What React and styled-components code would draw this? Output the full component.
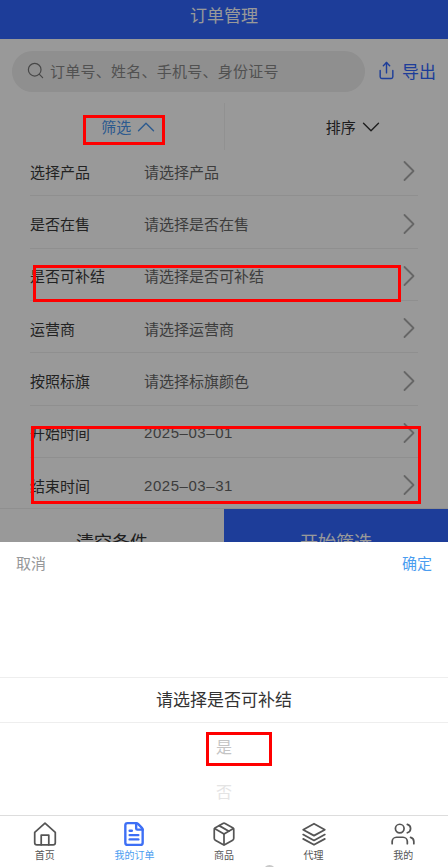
import styled, { createGlobalStyle } from "styled-components";
import { ChevronDown, ChevronRight, ChevronUp, FileText, Package, Search, Share, Users } from "lucide-react";

const GlobalStyle = createGlobalStyle`
  * {
    box-sizing: border-box;
  }
  body {
    margin: 0;
    font-family: "Liberation Sans", "Noto Sans CJK SC", sans-serif;
    background: #fff;
  }
`;

const Screen = styled.div`
  position: relative;
  width: 448px;
  height: 867px;
  overflow: hidden;
  background: #fff;
`;

const Header = styled.div`
  height: 39px;
  background: #3167ff;
  color: #fff;
  font-size: 17px;
  display: flex;
  align-items: center;
  justify-content: center;
  padding-bottom: 10px;
`;

const SearchRow = styled.div`
  display: flex;
  align-items: center;
  padding: 12px 12px 0;
  gap: 12px;
`;

const SearchBar = styled.div`
  flex-shrink: 0;
  width: 353px;
  height: 41px;
  border-radius: 21px;
  background: #eee;
  display: flex;
  align-items: center;
  padding: 0 0 2px 14px;
  gap: 5px;
  color: #888;
  font-size: 15px;
  letter-spacing: 0.25px;
`;

const ExportBtn = styled.div`
  display: flex;
  align-items: center;
  gap: 6px;
  color: #3167ff;
  font-size: 17px;
  white-space: nowrap;
  padding-bottom: 2px;
`;

const Tabs = styled.div`
  display: flex;
  height: 47px;
  margin-top: 11px;
`;

const Tab = styled.div`
  flex: 1;
  display: flex;
  align-items: center;
  justify-content: center;
  padding-left: 39px;
  font-size: 15px;
  color: ${(p) => (p.$active ? "#4a96ee" : "#333")};
  & + & {
    border-left: 1px solid #f2f2f2;
  }
`;

const RowList = styled.div`
  padding: 0 30px;
  margin-top: -6px;
`;

const Row = styled.div`
  height: 52.35px;
  display: flex;
  align-items: center;
  padding-top: 3px;
  font-size: 15px;
  color: #3a3a3a;
  border-bottom: 1px solid ${(p) => (p.$last ? "transparent" : "#eee")};
`;

const RowLabel = styled.div`
  width: 114px;
`;

const RowValue = styled.div`
  flex: 1;
  color: #666;
  letter-spacing: ${(p) => (p.$date ? "0.55px" : "0")};
`;

const RowArrow = styled.div`
  display: flex;
  margin-right: -9px;
  color: #aaa;
`;

const Footer = styled.div`
  display: flex;
  height: 50px;
  margin-top: -2px;
  border-top: 1px solid #eee;
`;

const FootBtn = styled.div`
  flex: 1;
  display: flex;
  justify-content: center;
  padding-top: 19px;
  font-size: 18px;
  background: ${(p) => (p.$primary ? "#3167ff" : "#fff")};
  color: ${(p) => (p.$primary ? "#fff" : "#333")};
`;

const Mask = styled.div`
  position: absolute;
  inset: 0;
  background: rgba(0, 0, 0, 0.4);
`;

const Sheet = styled.div`
  position: absolute;
  left: 0;
  right: 0;
  top: 542px;
  bottom: 0;
  background: #fff;
  display: flex;
  flex-direction: column;
`;

const SheetHead = styled.div`
  height: 136px;
  display: flex;
  justify-content: space-between;
  padding: 10px 16px 0;
  font-size: 15px;
  border-bottom: 1px solid #eee;
`;

const Cancel = styled.span`
  color: #969799;
`;

const Confirm = styled.span`
  color: #4a9df0;
`;

const SheetTitle = styled.div`
  height: 45px;
  display: flex;
  align-items: center;
  justify-content: center;
  padding-bottom: 3px;
  font-size: 17px;
  color: #333;
  border-bottom: 1px solid #eee;
`;

const Wheel = styled.div`
  height: 92px;
  display: flex;
  flex-direction: column;
  align-items: center;
`;

const Option = styled.div`
  height: 45px;
  display: flex;
  align-items: center;
  font-size: 16px;
  color: ${(p) => p.$color};
`;

const TabBar = styled.div`
  flex: 1;
  display: flex;
  border-top: 1px solid #ddd;
`;

const NavItem = styled.div`
  flex: 1;
  display: flex;
  flex-direction: column;
  align-items: center;
  padding-top: 5px;
  font-size: 10px;
  color: ${(p) => (p.$active ? "#4a9df0" : "#555")};
  svg {
    color: ${(p) => (p.$active ? "#3d6ff5" : "#555")};
  }
`;

const HomeDot = styled.div`
  position: absolute;
  left: 263px;
  top: 865px;
  width: 13px;
  height: 13px;
  border-radius: 50%;
  background: #c8c8c8;
`;

const RedBox = styled.div`
  position: absolute;
  left: ${(p) => p.$x}px;
  top: ${(p) => p.$y}px;
  width: ${(p) => p.$w}px;
  height: ${(p) => p.$h}px;
  border: 3px solid #f00;
`;

const HomeIcon = ({ size, strokeWidth }) => (
  <svg width={size} height={size} viewBox="0 0 24 24" fill="none" stroke="currentColor" strokeWidth={strokeWidth} strokeLinejoin="round" strokeLinecap="round">
    <path d="M2.5 10.5 12 2l9.5 8.5V20a2 2 0 0 1-2 2h-15a2 2 0 0 1-2-2z" />
    <path d="M8.5 22v-9h7v9" />
  </svg>
);

const StackIcon = ({ size, strokeWidth }) => (
  <svg width={size} height={size} viewBox="0 0 24 24" fill="none" stroke="currentColor" strokeWidth={strokeWidth} strokeLinejoin="round" strokeLinecap="round">
    <path d="M12 2.5 22 8l-10 5.5L2 8z" />
    <path d="M2 12.5l10 5.5 10-5.5" />
    <path d="M2 16.5l10 5.5 10-5.5" />
  </svg>
);

const rows = [
  ["选择产品", "请选择产品"],
  ["是否在售", "请选择是否在售"],
  ["是否可补结", "请选择是否可补结"],
  ["运营商", "请选择运营商"],
  ["按照标旗", "请选择标旗颜色"],
  ["开始时间", "2025–03–01", true],
  ["结束时间", "2025–03–31", true],
];

const navs = [
  { label: "首页", Icon: HomeIcon },
  { label: "我的订单", Icon: FileText, active: true },
  { label: "商品", Icon: Package },
  { label: "代理", Icon: StackIcon },
  { label: "我的", Icon: Users },
];

const marks = [
  { x: 83, y: 115, w: 82, h: 30 },
  { x: 33, y: 265, w: 368, h: 37 },
  { x: 31, y: 426, w: 390, h: 78 },
  { x: 206, y: 732, w: 66, h: 34 },
];

export default function App() {
  return (
    <Screen>
      <GlobalStyle />
      <Header>订单管理</Header>
      <SearchRow>
        <SearchBar>
          <Search size={19} strokeWidth={1.5} color="#777" />
          订单号、姓名、手机号、身份证号
        </SearchBar>
        <ExportBtn>
          <Share size={19} strokeWidth={1.8} />
          导出
        </ExportBtn>
      </SearchRow>
      <Tabs>
        <Tab $active>
          筛选
          <ChevronUp size={30} strokeWidth={1.1} />
        </Tab>
        <Tab>
          排序
          <ChevronDown size={30} strokeWidth={1.1} />
        </Tab>
      </Tabs>
      <RowList>
        {rows.map(([label, value, date], i) => (
          <Row key={label} $last={i === rows.length - 1}>
            <RowLabel>{label}</RowLabel>
            <RowValue $date={date}>{value}</RowValue>
            <RowArrow>
              <ChevronRight size={36} strokeWidth={1.2} />
            </RowArrow>
          </Row>
        ))}
      </RowList>
      <Footer>
        <FootBtn>清空条件</FootBtn>
        <FootBtn $primary>开始筛选</FootBtn>
      </Footer>
      <Mask />
      <Sheet>
        <SheetHead>
          <Cancel>取消</Cancel>
          <Confirm>确定</Confirm>
        </SheetHead>
        <SheetTitle>请选择是否可补结</SheetTitle>
        <Wheel>
          <Option $color="#c4c4c4">是</Option>
          <Option $color="#e4e4e4">否</Option>
        </Wheel>
        <TabBar>
          {navs.map(({ label, Icon, active }) => (
            <NavItem key={label} $active={active}>
              <Icon size={26} strokeWidth={active ? 2.2 : 1.6} />
              {label}
            </NavItem>
          ))}
        </TabBar>
      </Sheet>
      <HomeDot />
      {marks.map((m) => (
        <RedBox key={m.y} $x={m.x} $y={m.y} $w={m.w} $h={m.h} />
      ))}
    </Screen>
  );
}
